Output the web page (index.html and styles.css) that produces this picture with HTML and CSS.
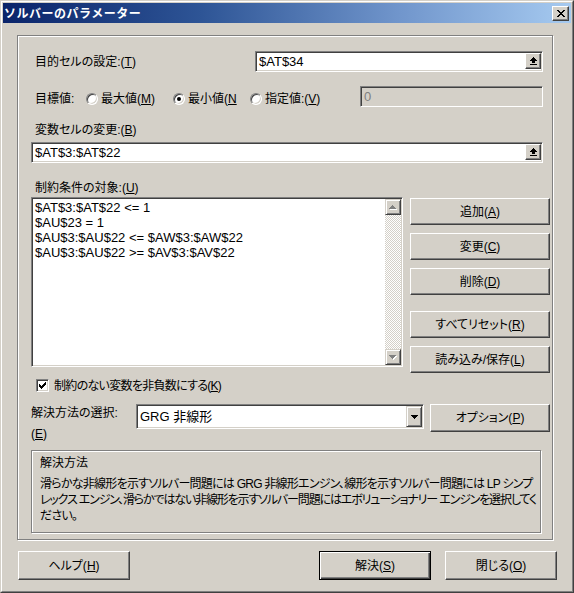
FILE: index.html
```html
<!DOCTYPE html>
<html lang="ja">
<head>
<meta charset="utf-8">
<title>ソルバーのパラメーター</title>
<link rel="stylesheet" href="styles.css">
</head>
<body>
<div class="window">
  <div class="window-inner">
    <div class="titlebar">
      <span class="title">ソルバーのパラメーター</span>
      <span class="close-btn">
        <svg width="8" height="7" viewBox="0 0 8 7" shape-rendering="crispEdges"><path fill="#000" d="M0 0h2v1H0zM6 0h2v1H6zM1 1h2v1H1zM5 1h2v1H5zM2 2h4v1H2zM3 3h2v1H3zM2 4h4v1H2zM1 5h2v1H1zM5 5h2v1H5zM0 6h2v1H0zM6 6h2v1H6z"/></svg>
      </span>
    </div>
    <div class="client">
      <div class="frame">
        <div class="row-target">
          <span class="lbl lbl-target">目的セルの設定:(<u>T</u>)</span>
          <div class="field sunken field-target">
            <span class="val">$AT$34</span>
            <span class="refbtn">
              <svg width="7" height="8" viewBox="0 0 7 8" shape-rendering="crispEdges"><path fill="#000" d="M3 0h1v1H3zM2 1h3v1H2zM1 2h5v1H1zM0 3h7v1H0zM2 4h3v2H2zM0 7h7v1H0z"/></svg>
            </span>
          </div>
        </div>

        <div class="row-goal">
          <span class="lbl lbl-goal">目標値:</span>
          <span class="radio-item ri-max"><span class="radio"></span><span>最大値(<u>M</u>)</span></span>
          <span class="radio-item ri-min"><span class="radio checked"></span><span>最小値(<u>N</u></span></span>
          <span class="radio-item ri-val"><span class="radio"></span><span>指定値:(<u>V</u>)</span></span>
          <div class="field sunken field-disabled"><span class="val">0</span></div>
        </div>

        <div class="lbl lbl-block lbl-vars">変数セルの変更:(<u>B</u>)</div>
        <div class="field sunken field-vars">
          <span class="val">$AT$3:$AT$22</span>
          <span class="refbtn">
            <svg width="7" height="8" viewBox="0 0 7 8" shape-rendering="crispEdges"><path fill="#000" d="M3 0h1v1H3zM2 1h3v1H2zM1 2h5v1H1zM0 3h7v1H0zM2 4h3v2H2zM0 7h7v1H0z"/></svg>
          </span>
        </div>

        <div class="lbl lbl-block lbl-cons">制約条件の対象:(<u>U</u>)</div>
        <div class="cons-row">
          <div class="listbox sunken">
            <div class="list-items">
              <div class="item">$AT$3:$AT$22 &lt;= 1</div>
              <div class="item">$AU$23 = 1</div>
              <div class="item">$AU$3:$AU$22 &lt;= $AW$3:$AW$22</div>
              <div class="item">$AU$3:$AU$22 &gt;= $AV$3:$AV$22</div>
            </div>
            <div class="vscroll">
              <span class="sbtn">
                <svg width="8" height="5" viewBox="0 0 8 5" shape-rendering="crispEdges"><path fill="#fff" d="M4 1h1v1H4zM3 2h3v1H3zM2 3h5v1H2zM1 4h7v1H1z"/><path fill="#808080" d="M3 0h1v1H3zM2 1h3v1H2zM1 2h5v1H1zM0 3h7v1H0z"/></svg>
              </span>
              <span class="track"></span>
              <span class="sbtn">
                <svg width="8" height="5" viewBox="0 0 8 5" shape-rendering="crispEdges"><path fill="#fff" d="M1 1h7v1H1zM2 2h5v1H2zM3 3h3v1H3zM4 4h1v1H4z"/><path fill="#808080" d="M0 0h7v1H0zM1 1h5v1H1zM2 2h3v1H2zM3 3h1v1H3z"/></svg>
              </span>
            </div>
          </div>
          <div class="side-buttons">
            <button class="btn side-btn">追加(<u>A</u>)</button>
            <button class="btn side-btn">変更(<u>C</u>)</button>
            <button class="btn side-btn">削除(<u>D</u>)</button>
            <button class="btn side-btn reset-btn">すべてリセット(<u>R</u>)</button>
            <button class="btn side-btn">読み込み/保存(<u>L</u>)</button>
          </div>
        </div>

        <div class="check-row">
          <span class="checkbox sunken">
            <svg width="7" height="7" viewBox="0 0 7 7" shape-rendering="crispEdges"><path fill="#000" d="M6 0h1v1H6zM5 1h2v1H5zM0 2h1v1H0zM4 2h3v1H4zM0 3h2v1H0zM3 3h3v1H3zM0 4h5v1H0zM1 5h3v1H1zM2 6h1v1H2z"/></svg>
          </span>
          <span class="check-label">制約のない変数を非負数にする(<u>K</u>)</span>
        </div>

        <div class="method-row">
          <span class="lbl method-label">解決方法の選択:<br>(<u>E</u>)</span>
          <div class="select sunken">
            <span class="val select-val">GRG 非線形</span>
            <span class="dropbtn">
              <svg width="7" height="4" viewBox="0 0 7 4" shape-rendering="crispEdges"><path fill="#000" d="M0 0h7v1H0zM1 1h5v1H1zM2 2h3v1H2zM3 3h1v1H3z"/></svg>
            </span>
          </div>
          <button class="btn options-btn">オプション(<u>P</u>)</button>
        </div>

        <div class="groupbox">
          <div class="group-title">解決方法</div>
          <div class="group-text">
            <span class="gline gline-1">滑らかな非線形を示すソルバー問題には GRG 非線形エンジン、線形を示すソルバー問題には LP シンプ</span>
            <span class="gline gline-2">レックス エンジン、滑らかではない非線形を示すソルバー問題にはエボリューショナリー エンジンを選択してく</span>
            <span class="gline gline-3">ださい。</span>
          </div>
        </div>
      </div>

      <div class="footer">
        <button class="btn foot-btn">ヘルプ(<u>H</u>)</button>
        <button class="btn foot-btn default-btn solve-btn">解決(<u>S</u>)</button>
        <button class="btn foot-btn close-dlg-btn">閉じる(<u>O</u>)</button>
      </div>
    </div>
  </div>
</div>
</body>
</html>
```

FILE: styles.css
```css
* { box-sizing: border-box; }

html, body {
  margin: 0;
  padding: 0;
}

body {
  width: 574px;
  height: 593px;
  overflow: hidden;
  background: #d4d0c8;
  color: #000;
  font-family: "Liberation Sans", "Noto Sans CJK JP", sans-serif;
  font-size: 12px;
  font-feature-settings: "palt" 1;
}

u { text-decoration: underline; text-underline-offset: 1px; }

.window {
  width: 574px;
  height: 593px;
  background: #d4d0c8;
  border: 1px solid;
  border-color: #d4d0c8 #404040 #404040 #d4d0c8;
}

.window-inner {
  height: 100%;
  border: 1px solid;
  border-color: #fff #808080 #808080 #fff;
  padding: 1px;
  display: flex;
  flex-direction: column;
}

/* Title bar */
.titlebar {
  height: 20px;
  flex: none;
  display: flex;
  align-items: center;
  padding: 0 2px 0 1px;
  background: linear-gradient(to right, #0a246a 0%, #2e5596 35%, #7196cc 70%, #a6caf0 100%);
}

.title {
  color: #fff;
  font-family: "Noto Sans CJK JP", sans-serif;
  font-weight: bold;
  font-size: 12px;
  line-height: 20px;
  letter-spacing: 0.5px;
  font-feature-settings: normal;
}

.close-btn {
  margin-left: auto;
  width: 17px;
  height: 15px;
  display: flex;
  align-items: center;
  justify-content: center;
  background: #d4d0c8;
  border: 1px solid;
  border-color: #fff #404040 #404040 #fff;
  box-shadow: inset -1px -1px 0 #808080;
}

/* Client */
.client {
  flex: 1;
  padding: 12px 14px 0 14px;
}

.frame {
  width: 536px;
  height: 505px;
  border: 1px solid #808080;
  box-shadow: 1px 1px 0 #fff, inset 1px 1px 0 #fff;
  padding: 15px 0 0 13px;
}

.lbl { line-height: 14px; white-space: nowrap; }
.lbl-block { margin-left: 4px; }

/* Sunken field */
.sunken {
  background: #fff;
  border: 1px solid;
  border-color: #808080 #fff #fff #808080;
  box-shadow: inset 1px 1px 0 #404040, inset -1px -1px 0 #d4d0c8;
}

.field {
  height: 21px;
  display: flex;
  align-items: center;
  padding: 1px 1px 1px 3px;
}

.val {
  font-size: 13px;
  line-height: 15px;
  white-space: nowrap;
}

.refbtn {
  margin-left: auto;
  align-self: flex-start;
  width: 16px;
  height: 16px;
  display: flex;
  align-items: center;
  justify-content: center;
  background: #d4d0c8;
  border: 1px solid;
  border-color: #fff #404040 #404040 #fff;
  box-shadow: inset -1px -1px 0 #808080;
}

/* Row: target */
.row-target {
  display: flex;
  align-items: center;
  height: 21px;
}
.lbl-target { margin-left: 4px; width: 220px; }
.field-target { width: 288px; }

/* Row: goal */
.row-goal {
  display: flex;
  align-items: flex-start;
  height: 21px;
  margin-top: 14px;
}
.lbl-goal { margin-left: 4px; width: 51px; margin-top: 6px; }

.radio-item {
  display: flex;
  align-items: center;
  gap: 3px;
  height: 14px;
  margin-top: 6px;
  line-height: 14px;
  white-space: nowrap;
}
.ri-max { width: 87px; }
.ri-min { width: 77px; }
.ri-val { width: 110px; }

.radio {
  flex: none;
  width: 12px;
  height: 12px;
  border-radius: 50%;
  background: #fff;
  border: 1px solid;
  border-color: #808080 #fff #fff #808080;
  box-shadow: inset 1px 1px 0 #404040, inset -1px -1px 0 #d4d0c8;
  display: flex;
  align-items: center;
  justify-content: center;
}
.radio.checked::after {
  content: "";
  width: 4px;
  height: 4px;
  border-radius: 50%;
  background: #000;
}

.field-disabled {
  width: 183px;
  background: #d4d0c8;
  color: #808080;
}

/* Variables */
.lbl-vars { margin-top: 16px; }
.field-vars { width: 512px; margin-top: 5px; }

/* Constraints */
.lbl-cons { margin-top: 18px; }

.cons-row {
  display: flex;
  align-items: flex-start;
  margin-top: 2px;
}

.listbox {
  width: 372px;
  height: 170px;
  display: flex;
  padding: 1px;
}

.list-items {
  flex: 1;
  padding: 1px 0 0 2px;
}

.item {
  font-size: 13px;
  line-height: 15px;
  white-space: nowrap;
}

.vscroll {
  width: 16px;
  display: flex;
  flex-direction: column;
}

.sbtn {
  width: 16px;
  height: 16px;
  flex: none;
  display: flex;
  align-items: center;
  justify-content: center;
  background: #d4d0c8;
  border: 1px solid;
  border-color: #d4d0c8 #404040 #404040 #d4d0c8;
  box-shadow: inset 1px 1px 0 #fff, inset -1px -1px 0 #808080;
}

.track {
  flex: 1;
  background-color: #d4d0c8;
  background-image: repeating-conic-gradient(#fff 0 25%, #d4d0c8 0 50%);
  background-size: 2px 2px;
}

.side-buttons {
  display: flex;
  flex-direction: column;
  gap: 8px;
  margin-left: 7px;
  margin-top: 1px;
}

/* Buttons */
.btn {
  font: inherit;
  color: #000;
  padding: 0;
  margin: 0;
  background: #d4d0c8;
  border: 1px solid;
  border-color: #fff #404040 #404040 #fff;
  box-shadow: inset -1px -1px 0 #808080;
  white-space: nowrap;
  line-height: 14px;
}

.side-btn { width: 140px; height: 27px; }
.reset-btn { margin-top: 8px; }

/* Checkbox */
.check-row {
  display: flex;
  align-items: center;
  gap: 5px;
  height: 13px;
  margin-top: 6px;
  margin-left: 5px;
}

.checkbox {
  width: 13px;
  height: 13px;
  display: flex;
  align-items: center;
  justify-content: center;
}

.check-label {
  line-height: 14px;
  white-space: nowrap;
  letter-spacing: -0.7px;
}

/* Method */
.method-row {
  display: flex;
  align-items: flex-start;
  margin-top: 11px;
}

.method-label {
  width: 105px;
  line-height: 21px;
}

.select {
  width: 288px;
  height: 25px;
  margin-top: 1px;
  display: flex;
  align-items: center;
  padding: 1px 1px 1px 3px;
}

.select-val { font-size: 13px; }

.dropbtn {
  margin-left: auto;
  width: 16px;
  height: 21px;
  display: flex;
  align-items: center;
  justify-content: center;
  background: #d4d0c8;
  border: 1px solid;
  border-color: #d4d0c8 #404040 #404040 #d4d0c8;
  box-shadow: inset 1px 1px 0 #fff, inset -1px -1px 0 #808080;
}

.options-btn {
  width: 120px;
  height: 28px;
  margin-left: 6px;
  margin-top: 1px;
}

/* Group box */
.groupbox {
  width: 510px;
  height: 83px;
  margin-top: 5px;
  border: 1px solid #808080;
  box-shadow: 1px 1px 0 #fff, inset 1px 1px 0 #fff;
  padding: 4px 4px 0 8px;
}

.group-title { line-height: 16px; }

.group-text {
  margin-top: 5px;
  display: flex;
  flex-direction: column;
}

.gline {
  display: block;
  line-height: 16px;
  white-space: nowrap;
}
.gline-1 { letter-spacing: -0.75px; }
.gline-2 { letter-spacing: -1.15px; }
.gline-3 { letter-spacing: -0.75px; }

/* Footer */
.footer {
  display: flex;
  margin-top: 11px;
  padding-left: 1px;
}

.foot-btn { width: 112px; height: 29px; }

.solve-btn { margin-left: auto; }
.close-dlg-btn { margin-left: 14px; }

.default-btn {
  border: 1px solid #000;
  box-shadow: inset 1px 1px 0 #fff, inset -1px -1px 0 #404040, inset -2px -2px 0 #808080;
}
```
